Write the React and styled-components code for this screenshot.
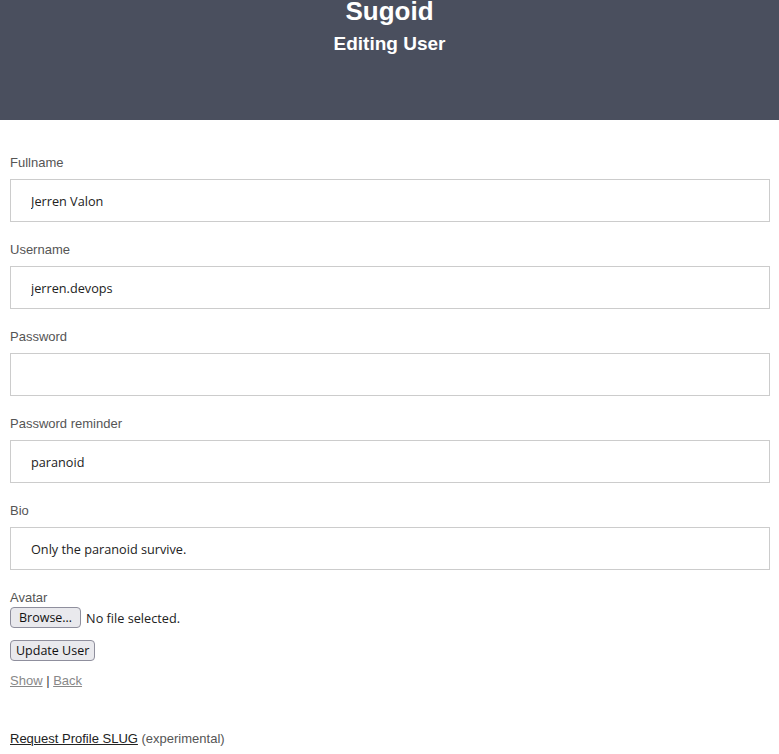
import React from 'react';
import styled, { createGlobalStyle } from 'styled-components';

const GlobalStyle = createGlobalStyle`
  html, body {
    margin: 0;
    padding: 0;
    background: #fff;
  }
  body {
    font-family: "Liberation Sans", Arial, sans-serif;
    font-size: 13px;
    color: #333;
  }
`;

const Header = styled.header`
  height: 120px;
  background: #4a4f5e;
  color: #fff;
  text-align: center;
  box-sizing: border-box;
  padding-top: 0;
`;

const Title = styled.h1`
  margin: 0;
  font-size: 26px;
  line-height: 22px;
  font-weight: bold;
`;

const Subtitle = styled.h2`
  margin: 11px 0 0;
  font-size: 19px;
  line-height: 22px;
  font-weight: bold;
`;

const Form = styled.form`
  padding: 35px 9px 0 10px;
`;

const Field = styled.div`
  display: flex;
  flex-direction: column;
  margin-bottom: 20px;
`;

const Label = styled.label`
  display: block;
  color: #555;
  font-size: 13px;
  line-height: 15px;
  margin-bottom: ${p => (p.$tight ? '2px' : '9px')};
`;

const Input = styled.input`
  box-sizing: border-box;
  width: 100%;
  height: 43px;
  border: 1px solid #ccc;
  padding: 0 20px;
  font-family: "Open Sans", "Noto Sans", sans-serif;
  font-size: 12.7px;
  color: #222;
  outline: none;
  background: #fff;
`;

const FileRow = styled.div`
  display: flex;
  align-items: center;
  gap: 5px;
`;

const Button = styled.button`
  font-family: "Open Sans", "Noto Sans", sans-serif;
  font-size: 12.5px;
  color: #111;
  background: #e9e9ed;
  border: 1px solid #8f8f9d;
  border-radius: 4px;
  height: 21px;
  padding: 0 ${p => (p.$wide ? '8px' : '5px')};
  line-height: 19px;
  cursor: pointer;
`;

const FileName = styled.span`
  font-family: "Open Sans", "Noto Sans", sans-serif;
  font-size: 12.7px;
  color: #222;
`;

const Actions = styled.div`
  margin-top: 12px;
`;

const NavLinks = styled.p`
  margin: 12px 0 0;
  line-height: 15px;
  color: #444;
`;

const Link = styled.a`
  color: ${p => (p.$muted ? '#888' : '#222')};
  text-decoration: underline;
`;

const Extra = styled.p`
  margin: 43px 0 0;
  line-height: 15px;
  color: #555;
`;

const fields = [
  { name: 'fullname', label: 'Fullname', value: 'Jerren Valon' },
  { name: 'username', label: 'Username', value: 'jerren.devops' },
  { name: 'password', label: 'Password', value: '', type: 'password' },
  { name: 'reminder', label: 'Password reminder', value: 'paranoid' },
  { name: 'bio', label: 'Bio', value: 'Only the paranoid survive.' },
];

const App = () => {
  return (
    <>
      <GlobalStyle />
      <Header>
        <Title>Sugoid</Title>
        <Subtitle>Editing User</Subtitle>
      </Header>
      <Form onSubmit={e => e.preventDefault()}>
        {fields.map(f => (
          <Field key={f.name}>
            <Label htmlFor={f.name}>{f.label}</Label>
            <Input id={f.name} type={f.type || 'text'} defaultValue={f.value} />
          </Field>
        ))}
        <Label $tight>Avatar</Label>
        <FileRow>
          <Button type="button" $wide>Browse…</Button>
          <FileName>No file selected.</FileName>
        </FileRow>
        <Actions>
          <Button type="submit">Update User</Button>
        </Actions>
        <NavLinks>
          <Link $muted href="#">Show</Link> | <Link $muted href="#">Back</Link>
        </NavLinks>
        <Extra>
          <Link href="#">Request Profile SLUG</Link> (experimental)
        </Extra>
      </Form>
    </>
  );
};

export default App;
